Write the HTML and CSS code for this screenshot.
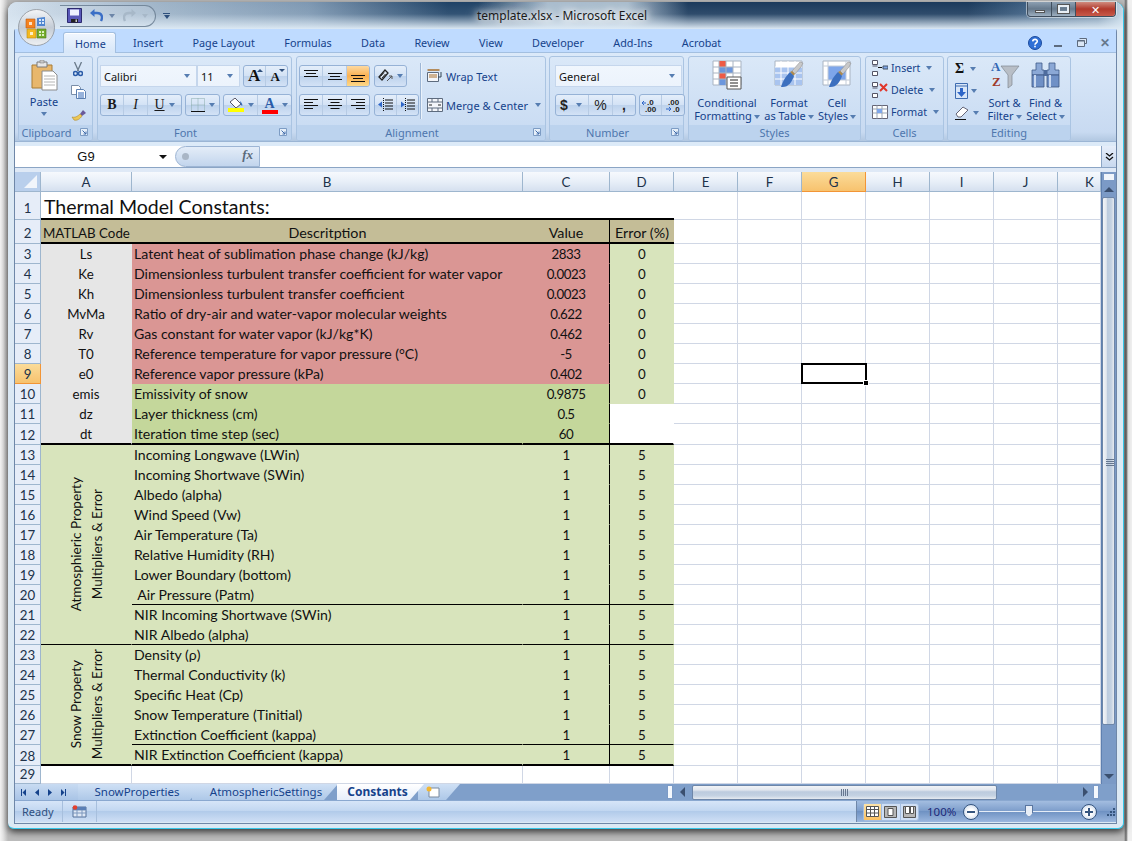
FILE: index.html
```html
<!DOCTYPE html>
<html lang="en">
<head>
<meta charset="utf-8">
<title>template.xlsx - Microsoft Excel</title>
<link rel="stylesheet" href="styles.css">
</head>
<body>
<svg class="defs" width="0" height="0">
  <defs>
    <symbol id="al-top" viewBox="0 0 14 14"><path d="M0 1.5h14M2 4.5h10M0 7.5h14" stroke="#111" stroke-width="1"/></symbol>
    <symbol id="al-mid" viewBox="0 0 14 14"><path d="M0 4.5h14M2 7.5h10M0 10.5h14" stroke="#111" stroke-width="1"/></symbol>
    <symbol id="al-bot" viewBox="0 0 14 14"><path d="M0 6.5h14M2 9.5h10M0 12.5h14" stroke="#111" stroke-width="1"/></symbol>
    <symbol id="ha-left" viewBox="0 0 14 12"><path d="M0 .5h14M0 3.5h9M0 6.5h14M0 9.5h9" stroke="#111" stroke-width="1"/></symbol>
    <symbol id="ha-center" viewBox="0 0 14 12"><path d="M0 .5h14M2.500 3.500h9M0 6.500h14M2.500 9.500h9" stroke="#111" stroke-width="1"/></symbol>
    <symbol id="ha-right" viewBox="0 0 14 12"><path d="M0 .5h14M5 3.500h9M0 6.500h14M5 9.500h9" stroke="#111" stroke-width="1"/></symbol>
    <symbol id="brush" viewBox="0 0 30 30"><path d="M29 3 27 7 21 14l-3-3 8-9z" fill="#c9c9c9" stroke="#888" stroke-width=".5"/><path d="M21 14l-3-3-2 1 3 4z" fill="#b08a4a"/><path d="M7 27c2-7 6-12 9-15l4 4c-2 6-6 12-13 11z" fill="#3d70bf"/></symbol>
    <symbol id="launch" viewBox="0 0 8 8"><path d="M.5.500h7v7h-7z" fill="#e6eff9" stroke="#7d9cc4"/><path d="M2.500 2.500 6 6M6 3.500V6H3.500" fill="none" stroke="#3e6aaa"/></symbol>
  </defs>
</svg>
<div class="window">
  <div class="office-btn">
    <svg width="37" height="37" viewBox="0 0 37 37">
      <defs><linearGradient id="orb" x1="0" y1="0" x2="0" y2="1"><stop offset="0" stop-color="#f4f6f8"/><stop offset=".5" stop-color="#c4ccd6"/><stop offset="1" stop-color="#eef0f2"/></linearGradient></defs>
      <circle cx="18.500" cy="18.500" r="18" fill="url(#orb)" stroke="#8a9098" stroke-width=".8"/>
      <path d="M8 10h9v9H8z" fill="#f58220" stroke="#b85a10" stroke-width=".6"/><path d="M11 13h3v3h-3z" fill="#fbe3c5"/>
      <path d="M19 9l8-1v9h-8z" fill="#4f86d0"/><path d="M21 10h2v2h-2zM24 10h2v2h-2zM21 13h2v2h-2zM24 13h2v2h-2z" fill="#d6e6f8"/>
      <path d="M9 20h9v9H9z" fill="#f5b920" stroke="#b88a10" stroke-width=".6"/><path d="M12 23h3v3h-3z" fill="#fdf0c5"/>
      <path d="M19 20h9v9h-9z" fill="#74ac2c" stroke="#4d7a16" stroke-width=".6"/><path d="M21 22h2v2h-2zM24 22h2v2h-2zM21 25h2v2h-2zM24 25h2v2h-2z" fill="#dcefbe"/>
    </svg>
  </div>
  <header class="titlebar">
    <div class="qat">
      <svg class="ic-save" width="15" height="15" viewBox="0 0 15 15"><path d="M.5.500h14v14H.5z" fill="#5a58b8" stroke="#2c2a70"/><path d="M3 1.500h9v6H3z" fill="#eef0ff"/><path d="M4 11h7v3.500H4z" fill="#222"/><path d="M8.500 11.500h1.500v2.500H8.500z" fill="#ccc"/></svg>
      <svg class="ic-undo" width="13" height="13" viewBox="0 0 13 13"><path d="M11 12c2-4 1-8-4-8H3" fill="none" stroke="#3b6fc6" stroke-width="2.400"/><path d="M4.500 0 0 4l4.500 4z" fill="#3b6fc6"/></svg>
      <span class="dd dd-qat"></span>
      <svg class="ic-redo" width="13" height="13" viewBox="0 0 13 13"><path d="M2 12C0 8 1 4 6 4h4" fill="none" stroke="#a7b8c8" stroke-width="2.400"/><path d="M8.500 0 13 4 8.500 8z" fill="#a7b8c8"/></svg>
      <span class="dd dd-qat dd-off"></span>
    </div>
    <span class="qat-more"><i></i><span class="dd dd-dark"></span></span>
    <h1 class="wintitle">template.xlsx - Microsoft Excel</h1>
    <div class="winctl">
      <span class="wc wc-min"><i></i></span>
      <span class="wc wc-max"><i></i></span>
      <span class="wc wc-close">✕</span>
    </div>
  </header>

  <div class="app">
    <nav class="tabstrip">
      <span class="rtab active">Home</span>
      <span class="rtab">Insert</span>
      <span class="rtab">Page Layout</span>
      <span class="rtab">Formulas</span>
      <span class="rtab">Data</span>
      <span class="rtab">Review</span>
      <span class="rtab">View</span>
      <span class="rtab">Developer</span>
      <span class="rtab">Add-Ins</span>
      <span class="rtab">Acrobat</span>
      <div class="docctl">
        <svg width="14" height="14" viewBox="0 0 14 14"><circle cx="7" cy="7" r="6.500" fill="#2f6fd6" stroke="#1c4a9c"/><path d="M4.700 5.300C5 2.700 9.300 2.700 9.300 5.200 9.300 7 7 7 7 8.700" fill="none" stroke="#fff" stroke-width="1.600"/><rect x="6.200" y="9.700" width="1.600" height="1.600" fill="#fff"/></svg>
        <span class="dc-min"></span>
        <svg width="10" height="9" viewBox="0 0 10 9"><path d="M2.500.500h7v5h-2M.5 2.500h7v6h-7z" fill="#dbe7f5" stroke="#5d6b7e"/><path d="M.5 3h7" stroke="#5d6b7e"/></svg>
        <span class="dc-x">✕</span>
      </div>
    </nav>

    <section class="ribbon">
      <div class="group g-clip">
        <div class="gbody clip-body">
          <div class="big paste">
            <svg width="27" height="31" viewBox="0 0 27 31">
              <path d="M1 5h20v23H1z" fill="#e8b76c" stroke="#a97c35"/>
              <path d="M6 2h10v5H6z" fill="#e6e6e6" stroke="#7b7b7b"/><path d="M9 0h4v3H9z" fill="#c7c7c7" stroke="#7b7b7b" stroke-width=".5"/>
              <path d="M11 11h11l4 4v15H11z" fill="#fff" stroke="#8c8c8c"/>
              <path d="M13 16h11M13 19h11M13 22h11M13 25h11" stroke="#b4b4b4"/>
            </svg>
            <span class="big-txt">Paste</span>
            <span class="dd"></span>
          </div>
          <div class="clip-tools">
            <svg width="10" height="15" viewBox="0 0 10 15"><path d="M1.500 0l4 9M8.500 0l-4 9" stroke="#6a7a8a" stroke-width="1.300"/><circle cx="2.500" cy="11.500" r="2" fill="none" stroke="#2b5ca8" stroke-width="1.600"/><circle cx="7.500" cy="11.500" r="2" fill="none" stroke="#2b5ca8" stroke-width="1.600"/></svg>
            <svg width="15" height="14" viewBox="0 0 15 14"><path d="M.5.500h7l2 2v7h-9z" fill="#fff" stroke="#7a8ea8"/><path d="M5.500 4.500h7l2 2v7h-9z" fill="#fff" stroke="#5b7fb0"/><path d="M7 8h6M7 10h6M7 12h6" stroke="#2e66b8"/></svg>
            <svg width="16" height="14" viewBox="0 0 16 14"><path d="M9 7 12 3l3 3-4 3z" fill="#6a5a9a"/><path d="M1 10c3 1 6-1 8-3l2 2c-2 3-5 5-8 4z" fill="#edc857" stroke="#b0892c" stroke-width=".6"/></svg>
          </div>
        </div>
        <div class="glabel gl-launch">Clipboard<svg class="launcher" width="8" height="8"><use href="#launch"/></svg></div>
      </div>

      <div class="group g-font">
        <div class="gbody stack">
          <div class="tools">
            <div class="combo c-font"><span>Calibri</span><span class="dd"></span></div>
            <div class="combo c-size"><span>11</span><span class="dd"></span></div>
            <div class="bg bg-grow">
              <span class="b glyph-a big-a">A<i class="tri"></i></span>
              <span class="b glyph-a small-a">A<i class="tri tri-d"></i></span>
            </div>
          </div>
          <div class="tools">
            <div class="bg">
              <span class="b w23 fmt fb">B</span>
              <span class="b w24 fmt fi">I</span>
              <span class="b w33 fmt"><u>U</u><span class="dd"></span></span>
            </div>
            <div class="bg bg-bord">
              <span class="b w35">
                <svg width="14" height="14" viewBox="0 0 14 14"><path d="M.5.500h13v13H.5zM7 .5v13M.5 7h13" fill="none" stroke="#8aa" stroke-dasharray="1 1"/><path d="M0 13.500h14" stroke="#111"/></svg>
                <span class="dd"></span>
              </span>
            </div>
            <div class="bg">
              <span class="b w34">
                <svg class="swatch" width="16" height="14" viewBox="0 0 16 14"><path d="M2 4l5-4 6 6-5 4z" fill="#fff" stroke="#556"/><path d="M12 3c2 2 3 4 2 5-1-1-2-3-2-5z" fill="#2e66b8"/><rect y="10" x="0" width="16" height="4" fill="#ffff00"/></svg>
                <span class="dd"></span>
              </span>
              <span class="b w33 fcolor"><span class="fc-a">A<i></i></span><span class="dd"></span></span>
            </div>
          </div>
        </div>
        <div class="glabel gl-launch">Font<svg class="launcher" width="8" height="8"><use href="#launch"/></svg></div>
      </div>

      <div class="group g-align">
        <div class="gbody align-body">
          <div class="stack narrow">
            <div class="tools">
              <div class="bg">
                <span class="b w23"><svg width="14" height="14"><use href="#al-top"/></svg></span>
                <span class="b w24"><svg width="14" height="14"><use href="#al-mid"/></svg></span>
                <span class="b w22 on"><svg width="14" height="14"><use href="#al-bot"/></svg></span>
              </div>
              <div class="bg">
                <span class="b w31">
                  <svg width="15" height="14" viewBox="0 0 15 14"><path d="M1 8l6-7 3 3-6 7z" fill="#dfe8f4" stroke="#222" stroke-width="1.300"/><path d="M2.500 7.500 6 3.500M4 9l3.500-4" stroke="#222"/><path d="M9 12l5-5M11 7h3v3" fill="none" stroke="#555"/></svg>
                  <span class="dd"></span>
                </span>
              </div>
            </div>
            <div class="tools">
              <div class="bg">
                <span class="b w23"><svg width="14" height="12"><use href="#ha-left"/></svg></span>
                <span class="b w24"><svg width="14" height="12"><use href="#ha-center"/></svg></span>
                <span class="b w22"><svg width="14" height="12"><use href="#ha-right"/></svg></span>
              </div>
              <div class="bg">
                <span class="b w22"><svg width="15" height="14" viewBox="0 0 15 14"><path d="M7 2h8M7 5h8M7 8h8M7 11h8" stroke="#111"/><path d="M5.500 0v14" stroke="#111" stroke-dasharray="1 1"/><path d="M0 6.500l4-3v6z" fill="#2e66c8"/></svg></span>
                <span class="b w21"><svg width="15" height="14" viewBox="0 0 15 14"><path d="M7 2h8M7 5h8M7 8h8M7 11h8" stroke="#111"/><path d="M5.500 0v14" stroke="#111" stroke-dasharray="1 1"/><path d="M5 6.500 1 3.500v6z" fill="#2e66c8"/></svg></span>
              </div>
            </div>
          </div>
          <div class="vdiv"></div>
          <div class="stack merge">
            <div class="mtool">
              <svg width="16" height="14" viewBox="0 0 16 14"><path d="M.5 1h12" stroke="#a96e2a" stroke-width="1.500"/><path d="M.5 3.500h11v9H.5z" fill="#f4f6fa" stroke="#5d6b7e"/><path d="M2 6h8M2 8h8" stroke="#a96e2a"/><path d="M14 3v5h-3" fill="none" stroke="#345"/></svg>
              <span>Wrap Text</span>
            </div>
            <div class="mtool">
              <svg width="16" height="14" viewBox="0 0 16 14"><path d="M.5.500h15v13H.5z" fill="#f4f6fa" stroke="#5d6b7e"/><path d="M.5 4h15M.5 10h15M5 .5V4M11 .5V4M5 10v3.500M11 10v3.500" stroke="#5d6b7e"/><path d="M2 7h3M14 7h-3" stroke="#222"/></svg>
              <span>Merge &amp; Center</span><span class="dd"></span>
            </div>
          </div>
        </div>
        <div class="glabel gl-launch">Alignment<svg class="launcher" width="8" height="8"><use href="#launch"/></svg></div>
      </div>

      <div class="group g-num">
        <div class="gbody stack">
          <div class="tools">
            <div class="combo c-num"><span>General</span><span class="dd"></span></div>
          </div>
          <div class="tools">
            <div class="bg">
              <span class="b w33 sym sym-d">$<span class="dd"></span></span>
              <span class="b w24 sym sym-pct">%</span>
              <span class="b w22 sym">,</span>
            </div>
            <div class="bg">
              <span class="b w22 dec"><svg width="17" height="15" viewBox="0 0 17 15"><text x="5" y="6.500" class="dec-t">.0</text><text x="3" y="14" class="dec-t">.00</text><path d="M4 5H0m2-2L0 5l2 2" fill="none" stroke="#2e66c8"/></svg></span>
              <span class="b w22 dec"><svg width="17" height="15" viewBox="0 0 17 15"><text x="3" y="6.500" class="dec-t">.00</text><text x="8" y="14" class="dec-t">.0</text><path d="M1 11h5m-2-2 2 2-2 2" fill="none" stroke="#2e66c8"/></svg></span>
            </div>
          </div>
        </div>
        <div class="glabel gl-launch">Number<svg class="launcher" width="8" height="8"><use href="#launch"/></svg></div>
      </div>

      <div class="group g-styles">
        <div class="gbody bigs">
          <div class="big s-cond">
            <svg width="30" height="30" viewBox="0 0 30 30">
              <path d="M1 1h28v24H1z" fill="#fff" stroke="#a9b4c2"/>
              <path d="M7 1h7v6H7zM7 13h7v6H7z" fill="#ee5a45"/><path d="M7 7h14v6H7zM7 19h7v6H7z" fill="#6c97dd"/>
              <path d="M1 7h28M1 13h28M1 19h28M7 1v24M14 1v24M21 1v24" stroke="#a9b4c2" fill="none"/>
              <path d="M15 17h14v12H15z" fill="#fff" stroke="#555"/><path d="M18 20h8M18 23h8M18 26h8" stroke="#222"/>
            </svg>
            <span class="big-txt">Conditional<br>Formatting<span class="dd"></span></span>
          </div>
          <div class="big s-table">
            <svg width="30" height="30" viewBox="0 0 30 30">
              <path d="M1 1h27v24H1z" fill="#fff" stroke="#a9b4c2"/>
              <path d="M1 7h27v18H1z" fill="#a9c4ef"/>
              <path d="M1 7h27M1 13h27M1 19h27M7 1v24M14 1v24M21 1v24" stroke="#fff" fill="none"/>
              <use href="#brush" width="30" height="30"/>
            </svg>
            <span class="big-txt">Format<br>as Table<span class="dd"></span></span>
          </div>
          <div class="big s-cell">
            <svg width="30" height="30" viewBox="0 0 30 30">
              <path d="M1 1h27v24H1z" fill="#fff" stroke="#a9b4c2"/>
              <path d="M6 6h18v14H6z" fill="#7ea6ea"/>
              <path d="M1 6h27M1 20h27M6 1v24M24 1v24" stroke="#c3ccd8" fill="none"/>
              <use href="#brush" width="30" height="30"/>
            </svg>
            <span class="big-txt">Cell<br>Styles<span class="dd"></span></span>
          </div>
        </div>
        <div class="glabel">Styles</div>
      </div>

      <div class="group g-cells">
        <div class="gbody cells-body">
          <div class="ctool">
            <svg width="16" height="16" viewBox="0 0 16 16"><path d="M.5.500h5v4h-5zM.5 11.500h5v4h-5zM.5 6h5" fill="#fff" stroke="#556"/><path d="M11 6h5v3h-5z" fill="#7ea6ea" stroke="#456"/><path d="M6 7.500h4" stroke="#111"/></svg>
            <span>Insert</span><span class="dd"></span>
          </div>
          <div class="ctool">
            <svg width="16" height="16" viewBox="0 0 16 16"><path d="M.5.500h5v4h-5zM.5 11.500h5v4h-5zM.5 6h5" fill="#fff" stroke="#556"/><path d="M8 2l7 7M15 2 8 9" stroke="#e0362a" stroke-width="2"/></svg>
            <span>Delete</span><span class="dd"></span>
          </div>
          <div class="ctool">
            <svg width="16" height="16" viewBox="0 0 16 16"><path d="M.5 1.500h15v13H.5z" fill="#fff" stroke="#667"/><path d="M.5 5h15M.5 9h15M5 1.500v13M10 1.500v13" stroke="#99a5b5"/><path d="M5 5h5v4H5z" fill="#7ea6ea"/></svg>
            <span>Format</span><span class="dd"></span>
          </div>
        </div>
        <div class="glabel">Cells</div>
      </div>

      <div class="group g-edit">
        <div class="gbody edit-body">
          <div class="edit-col">
            <div class="etool sigma">Σ<span class="dd"></span></div>
            <div class="etool"><svg width="13" height="16" viewBox="0 0 13 16"><path d="M.5.500h12v15H.5z" fill="#d8e6f8" stroke="#3e6cb0"/><path d="M.5 3h12" stroke="#3e6cb0"/><path d="M5 5h3v4h3l-4.500 5L2 9h3z" fill="#2e66c8"/></svg><span class="dd"></span></div>
            <div class="etool"><svg width="15" height="14" viewBox="0 0 15 14"><path d="M1 8l7-7 5 3-7 7H3z" fill="#fff" stroke="#667"/><path d="M0 13.500h11" stroke="#111"/></svg><span class="dd"></span></div>
          </div>
          <div class="big s-sort">
            <svg width="30" height="30" viewBox="0 0 30 30">
              <path d="M11 6h18L22 15v10l-4 3V15z" fill="#b8bec6" stroke="#808890" stroke-width=".7"/>
              <text x="1" y="11" class="sort-a">A</text>
              <text x="2" y="26" class="sort-z">Z</text>
            </svg>
            <span class="big-txt">Sort &amp;<br>Filter<span class="dd"></span></span>
          </div>
          <div class="big s-find">
            <svg width="29" height="30" viewBox="0 0 29 30">
              <path d="M5 3h6v7h2v5H1v-5h4zM18 3h6v7h4v5H16v-5h2z" fill="#8ba8d6" stroke="#3f5a88" stroke-width=".8"/>
              <path d="M1 15h12v12H1zM16 15h12v12H16z" fill="#6f90c6" stroke="#3a5482" stroke-width=".8"/>
              <path d="M4 15v12M19 15v12" stroke="#c8d8f0" stroke-width="2"/>
              <path d="M13 10h3v6h-3z" fill="#4e6c9e"/>
            </svg>
            <span class="big-txt">Find &amp;<br>Select<span class="dd"></span></span>
          </div>
        </div>
        <div class="glabel">Editing</div>
      </div>
    </section>

    <div class="formula">
      <div class="namebox"><span>G9</span><i class="nb-arrow"></i></div>
      <div class="fx-pill"><i class="fx-dot"></i><span class="fx">fx</span></div>
      <div class="fbar"></div>
      <div class="fexp">
        <svg width="9" height="8" viewBox="0 0 9 8"><path d="M1 0l3.500 3L8 0M1 4l3.500 3L8 4" fill="none" stroke="#111" stroke-width="1.300"/></svg>
      </div>
    </div>
    <div class="fgap"></div>

    <div class="sheet">
      <div class="grid-wrap">
        <table class="grid">
          <colgroup>
            <col class="c-rh"><col class="c-a"><col class="c-b"><col class="c-c"><col class="c-d">
            <col class="c-e"><col class="c-e"><col class="c-e"><col class="c-e"><col class="c-e"><col class="c-e"><col class="c-k">
          </colgroup>
          <thead>
            <tr><th class="corner"><i></i></th><th>A</th><th>B</th><th>C</th><th>D</th><th>E</th><th>F</th><th class="selh">G</th><th>H</th><th>I</th><th>J</th><th class="kh">K</th></tr>
          </thead>
          <tbody>
            <tr class="r1"><th>1</th><td colspan="4" class="title-c">Thermal Model Constants:</td><td></td><td></td><td></td><td></td><td></td><td></td><td></td></tr>
            <tr class="r2"><th>2</th><td class="tan tan-l">MATLAB Code</td><td class="tan ctr">Descritption</td><td class="tan ctr dl">Value</td><td class="tan ctr">Error (%)</td><td></td><td></td><td></td><td></td><td></td><td></td><td></td></tr>
            <tr><th>3</th><td class="gray ctr">Ls</td><td class="red">Latent heat of sublimation phase change (kJ/kg)</td><td class="red ctr dl">2833</td><td class="lg ctr">0</td><td></td><td></td><td></td><td></td><td></td><td></td><td></td></tr>
            <tr><th>4</th><td class="gray ctr">Ke</td><td class="red">Dimensionless turbulent transfer coefficient for water vapor</td><td class="red ctr dl">0.0023</td><td class="lg ctr">0</td><td></td><td></td><td></td><td></td><td></td><td></td><td></td></tr>
            <tr><th>5</th><td class="gray ctr">Kh</td><td class="red">Dimensionless turbulent transfer coefficient</td><td class="red ctr dl">0.0023</td><td class="lg ctr">0</td><td></td><td></td><td></td><td></td><td></td><td></td><td></td></tr>
            <tr><th>6</th><td class="gray ctr">MvMa</td><td class="red">Ratio of dry-air and water-vapor molecular weights</td><td class="red ctr dl">0.622</td><td class="lg ctr">0</td><td></td><td></td><td></td><td></td><td></td><td></td><td></td></tr>
            <tr><th>7</th><td class="gray ctr">Rv</td><td class="red">Gas constant for water vapor (kJ/kg*K)</td><td class="red ctr dl">0.462</td><td class="lg ctr">0</td><td></td><td></td><td></td><td></td><td></td><td></td><td></td></tr>
            <tr><th>8</th><td class="gray ctr">T0</td><td class="red">Reference temperature for vapor pressure (°C)</td><td class="red ctr dl">-5</td><td class="lg ctr">0</td><td></td><td></td><td></td><td></td><td></td><td></td><td></td></tr>
            <tr><th class="selh">9</th><td class="gray ctr">e0</td><td class="red">Reference vapor pressure (kPa)</td><td class="red ctr dl">0.402</td><td class="lg ctr">0</td><td></td><td></td><td></td><td></td><td></td><td></td><td></td></tr>
            <tr><th>10</th><td class="gray ctr">emis</td><td class="dg">Emissivity of snow</td><td class="dg ctr dl">0.9875</td><td class="lg ctr">0</td><td></td><td></td><td></td><td></td><td></td><td></td><td></td></tr>
            <tr><th>11</th><td class="gray ctr">dz</td><td class="dg">Layer thickness (cm)</td><td class="dg ctr dl">0.5</td><td class="blank"></td><td></td><td></td><td></td><td></td><td></td><td></td><td></td></tr>
            <tr class="r-thick"><th>12</th><td class="gray ctr">dt</td><td class="dg">Iteration time step (sec)</td><td class="dg ctr dl">60</td><td class="blank"></td><td></td><td></td><td></td><td></td><td></td><td></td><td></td></tr>
            <tr><th>13</th><td rowspan="10" class="lg vcell bb1"><div class="vtext">Atmosphieric Property<br>Multipliers &amp; Error</div></td><td class="lg">Incoming Longwave (LWin)</td><td class="lg ctr dl">1</td><td class="lg ctr">5</td><td></td><td></td><td></td><td></td><td></td><td></td><td></td></tr>
            <tr><th>14</th><td class="lg">Incoming Shortwave (SWin)</td><td class="lg ctr dl">1</td><td class="lg ctr">5</td><td></td><td></td><td></td><td></td><td></td><td></td><td></td></tr>
            <tr><th>15</th><td class="lg">Albedo (alpha)</td><td class="lg ctr dl">1</td><td class="lg ctr">5</td><td></td><td></td><td></td><td></td><td></td><td></td><td></td></tr>
            <tr><th>16</th><td class="lg">Wind Speed (Vw)</td><td class="lg ctr dl">1</td><td class="lg ctr">5</td><td></td><td></td><td></td><td></td><td></td><td></td><td></td></tr>
            <tr><th>17</th><td class="lg">Air Temperature (Ta)</td><td class="lg ctr dl">1</td><td class="lg ctr">5</td><td></td><td></td><td></td><td></td><td></td><td></td><td></td></tr>
            <tr><th>18</th><td class="lg">Relative Humidity (RH)</td><td class="lg ctr dl">1</td><td class="lg ctr">5</td><td></td><td></td><td></td><td></td><td></td><td></td><td></td></tr>
            <tr><th>19</th><td class="lg">Lower Boundary (bottom)</td><td class="lg ctr dl">1</td><td class="lg ctr">5</td><td></td><td></td><td></td><td></td><td></td><td></td><td></td></tr>
            <tr class="r-line"><th>20</th><td class="lg">&nbsp;Air Pressure (Patm)</td><td class="lg ctr dl">1</td><td class="lg ctr">5</td><td></td><td></td><td></td><td></td><td></td><td></td><td></td></tr>
            <tr><th>21</th><td class="lg">NIR Incoming Shortwave (SWin)</td><td class="lg ctr dl">1</td><td class="lg ctr">5</td><td></td><td></td><td></td><td></td><td></td><td></td><td></td></tr>
            <tr class="r-line"><th>22</th><td class="lg">NIR Albedo (alpha)</td><td class="lg ctr dl">1</td><td class="lg ctr">5</td><td></td><td></td><td></td><td></td><td></td><td></td><td></td></tr>
            <tr><th>23</th><td rowspan="6" class="lg vcell bb2"><div class="vtext">Snow Property<br>Multipliers &amp; Error</div></td><td class="lg">Density (ρ)</td><td class="lg ctr dl">1</td><td class="lg ctr">5</td><td></td><td></td><td></td><td></td><td></td><td></td><td></td></tr>
            <tr><th>24</th><td class="lg">Thermal Conductivity (k)</td><td class="lg ctr dl">1</td><td class="lg ctr">5</td><td></td><td></td><td></td><td></td><td></td><td></td><td></td></tr>
            <tr><th>25</th><td class="lg">Specific Heat (Cp)</td><td class="lg ctr dl">1</td><td class="lg ctr">5</td><td></td><td></td><td></td><td></td><td></td><td></td><td></td></tr>
            <tr><th>26</th><td class="lg">Snow Temperature (Tinitial)</td><td class="lg ctr dl">1</td><td class="lg ctr">5</td><td></td><td></td><td></td><td></td><td></td><td></td><td></td></tr>
            <tr class="r-line"><th>27</th><td class="lg">Extinction Coefficient (kappa)</td><td class="lg ctr dl">1</td><td class="lg ctr">5</td><td></td><td></td><td></td><td></td><td></td><td></td><td></td></tr>
            <tr class="r-end"><th>28</th><td class="lg">NIR Extinction Coefficient (kappa)</td><td class="lg ctr dl">1</td><td class="lg ctr">5</td><td></td><td></td><td></td><td></td><td></td><td></td><td></td></tr>
            <tr class="r29"><th>29</th><td></td><td></td><td></td><td></td><td></td><td></td><td></td><td></td><td></td><td></td><td></td></tr>
          </tbody>
        </table>
        <div class="selection"><i></i></div>
      </div>
      <div class="vscroll">
        <span class="split-v"></span>
        <span class="arrow-btn"><i class="tri-up"></i></span>
        <div class="vthumb"><i class="grip-h"></i></div>
        <div class="vtrack"></div>
        <span class="arrow-btn"><i class="tri-down"></i></span>
      </div>
    </div>

    <div class="tabbar">
      <div class="tabnav">
        <svg width="5" height="7" viewBox="0 0 5 7"><path d="M0 0h1v7H0zM5 0v7L1.500 3.500z" fill="#15428b"/></svg>
        <svg width="4" height="7" viewBox="0 0 4 7"><path d="M4 0v7L0 3.500z" fill="#15428b"/></svg>
        <svg width="4" height="7" viewBox="0 0 4 7"><path d="M0 0v7l4-3.500z" fill="#15428b"/></svg>
        <svg width="5" height="7" viewBox="0 0 5 7"><path d="M4 0h1v7H4zM0 0v7l3.500-3.500z" fill="#15428b"/></svg>
      </div>
      <span class="stab s1">SnowProperties</span>
      <span class="stab s2">AtmosphericSettings</span>
      <span class="stab s3 active">Constants</span>
      <span class="stab s4"><svg width="14" height="12" viewBox="0 0 14 12"><path d="M3 2h10v9H3z" fill="#fff" stroke="#7a8a9e"/><circle cx="3" cy="3" r="2.500" fill="#f2b632"/></svg></span>
      <span class="tabfill"></span>
      <span class="split-h"></span>
      <div class="hscroll">
        <i class="tri-left"></i>
        <div class="hthumb"><i class="grip-v"></i></div>
        <span class="htrack"></span>
        <i class="tri-right"></i>
      </div>
      <span class="split-h end"></span>
    </div>

    <footer class="status">
      <span class="st-ready">Ready</span>
      <span class="st-macro">
        <svg width="15" height="13" viewBox="0 0 15 13"><path d="M1 2h13v10H1z" fill="#dfe8f5" stroke="#55709a"/><path d="M1 5h13M1 8h13M5 2v10M10 2v10" stroke="#7d97bd"/><path d="M1 2h13v3H1z" fill="#5b7fb5"/><circle cx="3" cy="2.500" r="2.300" fill="#e3402e"/></svg>
      </span>
      <span class="st-fill"></span>
      <div class="st-right">
        <div class="views">
          <span class="v on"><svg width="13" height="11" viewBox="0 0 13 11"><path d="M.5.500h12v10H.5z" fill="#fff" stroke="#555"/><path d="M.5 3.500h12M.5 7h12M4.500.5v10M8.500.5v10" stroke="#555"/></svg></span>
          <span class="v"><svg width="13" height="12" viewBox="0 0 13 12"><path d="M.5.500h12v11H.5z" fill="#b7b7b7" stroke="#555"/><path d="M4 2.500h5v7H4z" fill="#fff" stroke="#555"/></svg></span>
          <span class="v"><svg width="13" height="12" viewBox="0 0 13 12"><path d="M.5.500h12v11H.5z" fill="#b7b7b7" stroke="#555"/><path d="M2.500.5h4v7h-4zM7.500.5h3v7h-3z" fill="#fff" stroke="#555"/></svg></span>
        </div>
        <span class="zoom">100%</span>
        <span class="zbtn"><i></i></span>
        <span class="zslider"><i class="thumb"></i></span>
        <span class="zbtn plus"><i></i></span>
        <svg class="sgrip" width="10" height="10" viewBox="0 0 10 10"><path d="M7 1h2v2H7zM4 4h2v2H4zM7 4h2v2H7zM1 7h2v2H1zM4 7h2v2H4zM7 7h2v2H7z" fill="#35557f"/></svg>
      </div>
    </footer>
  </div>
</div>
</body>
</html>
```

FILE: styles.css
```css
* { box-sizing: border-box; }
html, body { margin: 0; padding: 0; }
body {
  width: 1132px; height: 841px; overflow: hidden;
  background: linear-gradient(90deg, #f4f4f4 0, #e4e4e4 3px, #bbb 8px, #bbb 1124px, #666 1126px, #f0f0f0 1128px);
  font-family: "Noto Sans", "Open Sans", sans-serif;
  font-size: 11px; color: #15428b;
}
.defs { position: absolute; }
i { display: block; font-style: normal; }

.window {
  position: relative;
  width: 1116px; height: 827px; margin: 2px 0 0 8px;
  padding: 0 7px 5px 7px;
  display: flex; flex-direction: column;
  border-radius: 9px 9px 6px 6px;
  border-right: 1px solid #35c6e8; border-bottom: 1px solid #35c6e8;
  background: #dce9f4;
  box-shadow: 0 3px 7px rgba(0, 0, 0, .7);
}
.titlebar {
  height: 27px; margin: 0 -7px; padding-left: 52px;
  display: flex; align-items: center; position: relative;
  border-radius: 9px 9px 0 0;
  background:
    linear-gradient(180deg, rgba(220,233,244,0) 0, rgba(220,233,244,.1) 12px, #dce9f4 27px),
    linear-gradient(90deg, #d5e2ee 0, #9fb4c8 150px, #7e98b2 300px, #1f4266 440px, #1f4266 470px, #a9bccd 540px, #a9bccd 620px, #1b3a5c 680px, #1b3a5c 960px, #3d5f82 1020px, #6d8aa5 1090px, #c9dcea 1116px);
}
.office-btn { position: absolute; left: 10px; top: 7px; z-index: 3; width: 37px; height: 37px; }
.qat {
  display: flex; align-items: center; gap: 0;
  width: 96px; height: 22px; padding-left: 7px;
  border: 1px solid rgba(110,130,150,.9); border-left: 0;
  border-radius: 0 12px 12px 0;
  background: rgba(220,230,240,.2);
}
.ic-undo { margin-left: 8px; }
.ic-redo { margin-left: 8px; }
.dd {
  display: inline-block; width: 0; height: 0; vertical-align: middle;
  margin-left: 4px;
  border-left: 3.5px solid transparent; border-right: 3.5px solid transparent;
  border-top: 4px solid #567db1;
}
.dd-qat { margin: 0 0 0 6px; border-top-color: #6d86a8; }
.dd-off { border-top-color: #a7b8c8; }
.dd-dark { margin-left: 0; border-top-color: #2e4f7c; }
.qat-more { margin-left: 7px; display: flex; flex-direction: column; align-items: center; gap: 1px; }
.qat-more i { width: 7px; height: 1px; background: #2e4f7c; }
.wintitle {
  position: absolute; left: 469px; top: 0; margin: 0; height: 27px;
  font-size: 12px; font-weight: 400; line-height: 27px; color: #1a1a1a;
  font-family: "Noto Sans", sans-serif; white-space: nowrap;
  text-shadow: 0 0 6px #fff, 0 0 10px #fff, 0 0 14px #fff;
}
.winctl {
  margin-left: auto; margin-right: 7px; align-self: flex-start;
  width: 89px; height: 15px; display: flex;
  border: 1px solid #3f4e5e; border-top: 0; border-radius: 0 0 4px 4px; overflow: hidden;
  box-shadow: 0 0 0 1px rgba(255,255,255,.5);
}
.wc { display: flex; align-items: center; justify-content: center; height: 100%; background: linear-gradient(180deg,#8c9fb2 0,#66798c 50%,#9dafc0 100%); border-right: 1px solid #3f4e5e; }
.wc-min, .wc-max { width: 24px; }
.wc-min i { width: 10px; height: 3px; margin-top: 4px; background: #e8eef4; border: 1px solid #555; }
.wc-max i { width: 11px; height: 8px; border: 2px solid #e8eef4; outline: 1px solid #555; }
.wc-close { flex: 1; border: 0; color: #fff; font-size: 11px; background: linear-gradient(180deg,#d08a7e 0,#b1392c 50%,#c85a4a 100%); }

.app {
  flex: 1; display: flex; flex-direction: column; min-height: 0;
  border-radius: 3px 3px 0 0;
  box-shadow: 0 0 0 1px #6f87a8;
}
.tabstrip {
  height: 24px; padding: 3px 0 0 48px;
  display: flex; gap: 5.4px;
  background: #bfdbff;
  border-bottom: 1px solid #a3bfe0;
  position: relative;
}
.rtab { padding: 0 12px; line-height: 21px; font-size: 10.8px; height: 21px; }
.rtab.active {
  height: 22px;
  background: linear-gradient(180deg, #f0f6fe 0, #d5e5f8 100%);
  border: 1px solid #a3bfe0; border-bottom: 0; border-radius: 3px 3px 0 0;
  padding: 0 9px 0 11px;
  box-shadow: inset 0 1px 0 #fff;
}
.docctl { margin-left: auto; margin-right: 2px; display: flex; align-items: center; height: 21px; color: #66788c; }
.docctl svg:first-child { margin-right: 12px; }
.dc-min { width: 8px; height: 2px; margin-top: 7px; margin-right: 15px; background: #5d6b7e; }
.dc-x { margin-left: 13px; font-size: 12px; font-weight: 700; width: 14px; }

.ribbon {
  height: 93px; padding: 3px 0 0 3px;
  display: flex; gap: 3px;
  background: linear-gradient(180deg, #dbe9f9 0, #c8daf1 85%, #a5bdd8 100%);
  position: relative;
  box-shadow: inset 0 -4px 0 #dceaf8, inset 0 -5px 0 #9bb5d4;
}
.group {
  height: 85px; display: flex; flex-direction: column;
  border: 1px solid #aac4e2; border-radius: 3px;
  background: linear-gradient(180deg, #dae8f8 0, #c7daf2 100%);
}
.g-clip { width: 75px; margin-right: 1px; }
.g-font { width: 195px; margin-right: 1px; }
.g-align { width: 250px; }
.g-num { width: 135px; margin-right: 1px; }
.g-styles { width: 173px; margin-right: 1px; }
.g-cells { width: 79px; }
.g-edit { width: 124px; }
.gbody { height: 68px; }
.glabel {
  flex: 1; position: relative; text-align: center; line-height: 15px;
  background: #bcd3ee; color: #4e76ad; font-size: 11px;
  border-radius: 0 0 2px 2px;
}
.gl-launch { padding-right: 18px; }
.launcher { position: absolute; right: 4px; top: 3px; }

.clip-body { display: flex; padding: 3px 0 0 7px; }
.big { display: flex; flex-direction: column; align-items: center; }
.big .dd { margin-left: 2px; }
.big-txt { line-height: 13px; text-align: center; font-size: 11px; white-space: nowrap; }
.paste { width: 36px; }
.paste .big-txt { margin-top: 4px; }
.paste .dd { margin: 4px 0 0 0; }
.clip-tools { margin-left: 9px; padding-top: 2px; display: flex; flex-direction: column; gap: 8px; align-items: flex-start; }
.clip-tools svg:first-child { margin-left: 2px; }

.stack { display: flex; flex-direction: column; gap: 7px; padding: 8px 0 0 2px; }
.tools { display: flex; gap: 3px; height: 22px; }
.combo {
  display: flex; align-items: center; justify-content: space-between;
  height: 22px; padding: 0 6px 0 3px;
  background: linear-gradient(180deg, #f0f6fd 0, #ecf3fc 100%);
  border: 1px solid #c5d6ec;
  color: #111; font-size: 11px;
}
.c-font { width: 97px; margin-right: -3px; }
.c-size { width: 43px; }
.c-num { width: 127px; margin-left: 3px; padding-left: 3px; }
.bg {
  display: flex; height: 22px;
  border: 1px solid #96b2d6; border-radius: 3px;
  background: linear-gradient(180deg, #e4eefa 0, #d3e2f5 50%, #bdd2ec 51%, #d3e2f6 100%);
}
.b {
  height: 100%; display: flex; align-items: center; justify-content: center;
  border-right: 1px solid #b7cbe4; color: #111;
}
.b:last-child { border-right: 0; }
.b .dd { margin-left: 4px; }
.w21 { width: 21px; } .w22 { width: 22px; } .w23 { width: 23px; } .w24 { width: 24px; }
.w31 { width: 31px; } .w33 { width: 33px; } .w34 { width: 34px; } .w35 { width: 33px; }
.b.on { background: linear-gradient(180deg, #fdd9a0 0, #fbb050 50%, #fdd98a 100%); border-radius: 0 2px 2px 0; }
.fmt { font-family: "Liberation Serif", serif; font-size: 14px; color: #1a1a1a; }
.fb { font-weight: 700; }
.fi { font-style: italic; }
.bg-grow { width: 45px; }
.glyph-a { font-family: "Liberation Serif", serif; font-weight: 700; position: relative; flex: 1; justify-content: flex-start; padding-left: 4px; }
.big-a { font-size: 17px; }
.small-a { font-size: 13px; padding-left: 5px; padding-top: 2px; }
.tri { position: absolute; right: 2px; top: 3px; width: 0; height: 0; border-left: 3px solid transparent; border-right: 3px solid transparent; border-bottom: 3px solid #2e4f7c; }
.tri-d { border-bottom: 0; border-top: 3px solid #2e4f7c; }
.fcolor .fc-a { font-family: "Liberation Serif", serif; font-weight: 700; font-size: 14px; line-height: 13px; color: #2b5ca8; display: flex; flex-direction: column; align-items: center; width: 16px; }
.fc-a i { width: 16px; height: 4px; background: #f00; }

.align-body { display: flex; }
.narrow { width: 123px; }
.narrow .tools { gap: 4px; }
.vdiv { width: 1px; height: 56px; margin-top: 6px; background: #9db6d5; box-shadow: 1px 0 0 #eaf2fb; }
.merge { padding: 8px 0 0 6px; }
.mtool { height: 22px; display: flex; align-items: center; gap: 3px; white-space: nowrap; }

.sym { font-family: "Liberation Sans", sans-serif; font-weight: 700; font-size: 14px; color: #222; }
.sym-pct { font-weight: 400; }
.sym-d { justify-content: flex-start; padding-left: 4px; }
.sym .dd { margin-left: 8px; }
.g-num .tools:last-child { padding-left: 3px; }
.dec-t { font: 700 8px "Liberation Sans", sans-serif; fill: #222; }

.bigs { display: flex; padding: 3px 0 0 6px; }
.bigs svg, .edit-body .big svg { margin-bottom: 6px; }
.s-cond { width: 64px; }
.s-table { width: 60px; }
.s-cell { width: 40px; margin-left: -2px; }
.s-cond svg { margin-left: -1px; }

.cells-body { padding: 3px 0 0 6px; display: flex; flex-direction: column; gap: 6px; }
.ctool { height: 16px; display: flex; align-items: center; gap: 3px; font-size: 10.6px; }
.ctool .dd { margin-left: 3px; }

.edit-body { display: flex; padding: 3px 0 0 7px; }
.edit-col { width: 29px; flex: none; display: flex; flex-direction: column; gap: 6px; padding-top: 1px; }
.etool { height: 16px; display: flex; align-items: center; color: #111; }
.etool .dd { margin-left: 3px; }
.sigma { font: 700 14px "Liberation Serif", serif; }
.sigma .dd { margin-left: 6px; }
.s-sort { width: 41px; }
.s-find { width: 41px; }
.sort-a { font: 700 13px "Liberation Serif", serif; fill: #3467b3; }
.sort-z { font: 700 13px "Liberation Serif", serif; fill: #a03a2a; }

.formula { height: 22px; display: flex; background: #fff; border-bottom: 1px solid #8ba5c5; }
.namebox { width: 158px; position: relative; display: flex; align-items: center; justify-content: center; padding-right: 16px; font: 13px "Liberation Sans", sans-serif; color: #111; background: #fff; }
.nb-arrow { position: absolute; right: 6px; top: 9px; width: 0; height: 0; border-left: 4px solid transparent; border-right: 4px solid transparent; border-top: 4px solid #111; }
.fx-pill {
  width: 85px; margin-left: 2px; height: 21px; position: relative;
  border: 1px solid #9db5d4; border-radius: 11px 0 0 11px;
  background: linear-gradient(180deg, #e4edf8 0, #c2d5ed 100%);
}
.fx-dot { position: absolute; left: 6px; top: 6px; width: 7px; height: 7px; border-radius: 50%; background: #a9b6c6; }
.fx { position: absolute; right: 6px; top: 0; font: italic 700 13px "Liberation Serif", serif; color: #5a6a7a; }
.fbar { flex: 1; background: #fff; }
.fexp { width: 15px; display: flex; align-items: center; justify-content: center; background: linear-gradient(180deg,#e6eefa 0,#c8d9ef 100%); border-left: 1px solid #8ba5c5; }
.fgap { height: 4px; background: #dfe9f6; }

.sheet { height: 612px; display: flex; background: #fff; }
.grid-wrap { position: relative; width: 1086px; height: 612px; overflow: hidden; flex: none; }
.grid {
  table-layout: fixed; border-collapse: separate; border-spacing: 0;
  width: 1086px; font-family: "Lato", sans-serif; font-size: 13.3px; color: #111;
}
.c-rh { width: 26px; } .c-a { width: 91px; } .c-b { width: 391px; } .c-c { width: 87px; } .c-d { width: 64px; } .c-e { width: 64px; } .c-k { width: 43px; }
.grid th {
  font-weight: 400; padding: 0; text-align: center;
  font-family: "Lato", sans-serif; font-size: 13.3px; color: #20324a;
  background: #e6edf8;
  border-right: 1px solid #9eb6ce; border-bottom: 1px solid #9eb6ce;
}
.grid tbody th { vertical-align: bottom; line-height: 17px; }
.grid thead th {
  height: 20px; vertical-align: middle;
  background: linear-gradient(180deg, #f6f9fd 0, #e8eff8 50%, #d5e0ef 100%);
}
.grid thead th.kh { padding-left: 21px; }
.grid th.selh { background: linear-gradient(180deg, #fbdc9a 0, #f7c26e 100%); border-color: #f29536; }
.grid thead th.corner { position: relative; background: #b9cfec; }
.corner i { position: absolute; right: 3px; bottom: 3px; width: 0; height: 0; border-left: 13px solid transparent; border-bottom: 13px solid #f1f5fb; }
.grid td {
  height: 20px; padding: 0 2px; white-space: nowrap; line-height: 17px;
  border-right: 1px solid #d0d7e5; border-bottom: 1px solid #d0d7e5;
  vertical-align: bottom; overflow: hidden;
}
.grid td.red, .grid td.dg, .grid td.lg { font-size: 14.1px; line-height: 19px; }
.grid td.ctr { text-align: center; font-size: 13.3px; letter-spacing: -.5px; line-height: 17px; }
.grid td.gray.ctr { letter-spacing: 0; }
.r1 th, .r1 td { height: 28px; }
.r2 th, .r2 td { height: 24px; }
.grid .r1 th { padding-bottom: 2px; }
.grid .r2 th { padding-bottom: 1px; }
.grid td.title-c { font-size: 19.5px; line-height: 22px; padding-left: 3px; border-right: 0; border-bottom: 2px solid #000; }
.grid td.tan { background: #c4bd97; border-right: 0; border-bottom: 2px solid #000; line-height: 18px; }
.grid td.tan.ctr { font-size: 14.3px; letter-spacing: 0; line-height: 18px; }
.grid td.gray { background: #e6e6e6; border-color: #e6e6e6; }
.grid td.red { background: #da9694; border-color: #da9694; }
.grid td.dg { background: #c4d79b; border-color: #c4d79b; }
.grid td.lg { background: #d8e4bc; border-color: #d8e4bc; }
.grid td.blank { border-color: #fff; }
.grid td.dl { border-right: 1px solid #000; }
.r-thick th, .r-thick td, .r-end th, .r-end td { height: 21px; }
.grid .r-thick td { border-bottom: 2px solid #000; }
.grid .r-line td:nth-of-type(-n+3) { border-bottom: 1px solid #000; }
.grid .r-end td:nth-of-type(-n+3) { border-bottom: 2px solid #000; }
.grid .r-thick td:nth-of-type(n+5) { border-bottom: 1px solid #d0d7e5; }
.grid td.vcell { padding: 0 0 0 1px; vertical-align: middle; font-size: 13.6px; }
.grid td.bb1 { border-bottom: 1px solid #000; }
.grid td.bb2 { border-bottom: 2px solid #000; }
.r29 th, .r29 td { height: 18px; }
.vtext {
  writing-mode: vertical-rl; transform: rotate(180deg);
  text-align: center; line-height: 21px; margin: 0 auto;
  white-space: nowrap;
}
.selection {
  position: absolute; left: 786px; top: 191px; width: 66px; height: 21px;
  border: 2px solid #000;
}
.selection i { position: absolute; right: -4px; bottom: -4px; width: 6px; height: 6px; background: #000; border: 1px solid #fff; }

.vscroll { width: 15px; display: flex; flex-direction: column; background: #7b9ac6; border-left: 1px solid #5f80b0; }
.split-v { height: 8px; margin: 1px; background: #f0f5fb; border: 1px solid #7b9ac6; }
.arrow-btn { height: 15px; display: flex; align-items: center; justify-content: center; }
.tri-up { width: 0; height: 0; border-left: 5px solid transparent; border-right: 5px solid transparent; border-bottom: 5px solid #3a4f6f; }
.tri-down { width: 0; height: 0; border-left: 5px solid transparent; border-right: 5px solid transparent; border-top: 5px solid #3a4f6f; }
.vthumb {
  height: 528px; position: relative; flex: none;
  background: linear-gradient(90deg, #f2f4f7 0, #e2e7ee 30%, #bccbde 40%, #c4d2e2 75%, #e6eaf0 100%);
  border: 1px solid #6d86a8; border-radius: 2px; margin-right: 1px;
}
.grip-h { position: absolute; left: 3px; top: 261px; width: 8px; height: 7px; background: repeating-linear-gradient(180deg, #66778f 0 1px, transparent 1px 2px); }
.vtrack { flex: 1; }

.tabbar { height: 16px; display: flex; align-items: center; background: #7f9fca; color: #15428b; position: relative; }
.tabnav { width: 63px; height: 16px; flex: none; padding-left: 6px; display: flex; align-items: center; gap: 9px; background: linear-gradient(180deg,#c8dbf2 0,#a9c4e6 100%); }
.stab {
  height: 16px; line-height: 16px; text-align: center; flex: none; position: relative;
  background: linear-gradient(180deg,#cfe0f5 0,#aec8e8 100%);
  clip-path: polygon(0 0, 100% 0, calc(100% - 14px) 100%, 0 100%);
  font-size: 11.5px;
}
.s1 { width: 126px; padding-right: 8px; }
.s2 { width: 146px; margin-left: -12px; padding-left: 8px; padding-right: 6px; }
.s3 { width: 87px; margin-left: -1px; padding-right: 6px; background: linear-gradient(180deg,#fff 0,#e6eefa 100%); font-weight: 700; font-size: 12px; z-index: 2; }
.s4 { width: 42px; margin-left: -6px; padding: 0 12px 0 0; display: flex; align-items: center; justify-content: center; }
.tabfill { flex: 1; }
.split-h { width: 6px; height: 14px; background: #f4f8fd; border: 1px solid #7b9ac6; flex: none; }
.split-h.end { margin-right: 17px; }
.hscroll { width: 420px; height: 16px; display: flex; align-items: center; flex: none; }
.tri-left { width: 0; height: 0; margin: 0 7px; border-top: 5px solid transparent; border-bottom: 5px solid transparent; border-right: 5px solid #3a4f6f; }
.tri-right { width: 0; height: 0; margin-right: 5px; border-top: 5px solid transparent; border-bottom: 5px solid transparent; border-left: 5px solid #3a4f6f; }
.hthumb { width: 305px; height: 15px; position: relative; flex: none; border: 1px solid #6d86a8; border-radius: 2px; background: linear-gradient(180deg,#f2f4f7 0,#e2e7ee 30%,#bccbde 45%,#c4d2e2 75%,#e6eaf0 100%); }
.grip-v { position: absolute; left: 148px; top: 3px; width: 7px; height: 7px; background: repeating-linear-gradient(90deg,#66778f 0 1px,transparent 1px 2px); }
.htrack { flex: 1; }

.status {
  height: 22px; display: flex; align-items: center;
  background: linear-gradient(180deg, #d6e5f8 0, #c2d7f1 45%, #b2cbea 50%, #cfdff5 100%);
  border-top: 1px solid #8aa8d0;
  color: #2f4f7f;
  font-size: 11px;
}
.st-ready { width: 48px; padding-left: 7px; border-right: 1px solid #a7bfdd; height: 100%; line-height: 21px; }
.st-macro { width: 34px; height: 100%; display: flex; align-items: center; justify-content: center; border-right: 1px solid #a7bfdd; }
.st-fill { flex: 1; }
.st-right {
  width: 260px; height: 100%; display: flex; align-items: center; padding-left: 6px;
  background: linear-gradient(180deg, #a3bde0 0, #7f9fcc 45%, #6f92c3 50%, #9bb7de 100%);
  border-left: 1px solid #6f87a8;
}
.views { display: flex; width: 56px; height: 18px; border: 1px solid #a3bde0; border-radius: 3px; background: #cfdff5; }
.v { flex: 1; display: flex; align-items: center; justify-content: center; border-right: 1px solid #a3bde0; }
.v:last-child { border: 0; }
.v.on { background: linear-gradient(180deg,#fde3a8 0,#fbc061 100%); }
.zoom { width: 36px; margin-left: 8px; color: #1d2a7a; font-size: 11.5px; }
.zbtn { width: 16px; height: 16px; border-radius: 50%; position: relative; flex: none; border: 1px solid #35557f; background: radial-gradient(circle, #fff 30%, #c8d6ea 90%); }
.zbtn i { position: absolute; left: 3px; top: 6px; width: 8px; height: 2px; background: #35557f; }
.zbtn.plus::after { content: ""; position: absolute; left: 6px; top: 3px; width: 2px; height: 8px; background: #35557f; }
.zslider { width: 102px; height: 1px; background: #e4ecf7; position: relative; flex: none; }
.zslider .thumb { position: absolute; left: 46px; top: -6px; width: 8px; height: 12px; background: #e8eef7; border: 1px solid #5a76a0; clip-path: polygon(0 0, 100% 0, 100% 65%, 50% 100%, 0 65%); }
.sgrip { margin-left: 9px; }
```
